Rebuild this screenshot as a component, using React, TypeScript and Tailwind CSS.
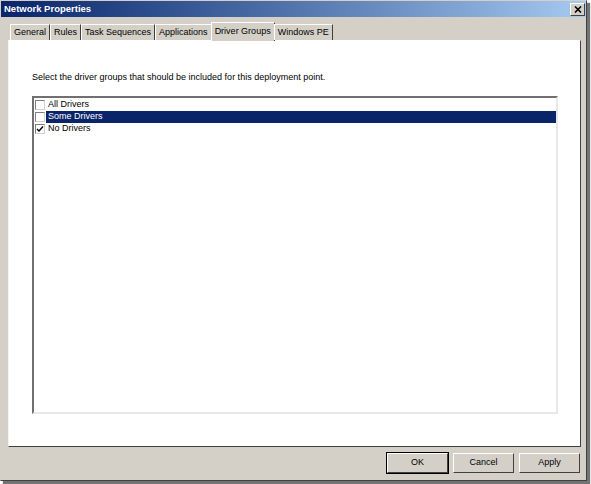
const tabs = ["General", "Rules", "Task Sequences", "Applications", "Driver Groups", "Windows PE"];

const items = [
  { label: "All Drivers", checked: false, selected: false },
  { label: "Some Drivers", checked: false, selected: true },
  { label: "No Drivers", checked: true, selected: false },
];

const Checkbox = ({ checked }: { checked: boolean }) => (
  <div className="w-[10px] h-[10px] bg-white border border-t-[#808080] border-l-[#808080] border-r-[#d4d0c8] border-b-[#d4d0c8] flex items-center justify-center shrink-0">
    {checked && (
      <svg width="8" height="8" viewBox="0 0 8 8">
        <path d="M1 4 L3 6 L7 1.5" fill="none" stroke="#000" strokeWidth="1.4" />
      </svg>
    )}
  </div>
);

const Button = ({ label, isDefault }: { label: string; isDefault?: boolean }) => (
  <button
    className={`w-[61px] h-[20px] bg-[#d4d0c8] text-[9px] text-black border border-t-white border-l-white border-r-[#404040] border-b-[#404040] ${
      isDefault ? "outline outline-1 outline-black" : ""
    }`}
  >
    {label}
  </button>
);

export default function App() {
  return (
    <div className="w-[591px] h-[484px] bg-white font-['Liberation_Sans',Arial,sans-serif]">
      <div className="w-[587px] h-[481px] bg-[#d4d0c8] border border-t-[#d4d0c8] border-l-[#d4d0c8] border-r-[#404040] border-b-[#404040] shadow-[3px_3px_1px_rgba(0,0,0,0.55)] flex flex-col">
        <div className="h-[16px] bg-gradient-to-r from-[#0a246a] to-[#a6caf0] flex items-center justify-between pl-[3px] pr-[1px]">
          <span className="text-white font-bold text-[9.5px]">Network Properties</span>
          <div className="w-[15px] h-[13px] bg-[#d4d0c8] border border-t-white border-l-white border-r-[#404040] border-b-[#404040] flex items-center justify-center">
            <svg width="8" height="7" viewBox="0 0 8 7">
              <path d="M1 0.5 L7 6.5 M7 0.5 L1 6.5" stroke="#000" strokeWidth="1.6" />
            </svg>
          </div>
        </div>

        <div className="flex items-end h-[18px] mt-[5px] pl-[9px] relative z-10">
          {tabs.map((t) => {
            const active = t === "Driver Groups";
            return (
              <div
                key={t}
                className={`px-[3px] text-[9px] text-black border-t border-l border-r border-t-white border-l-white border-r-[#404040] bg-[#d4d0c8] flex items-center ${
                  active ? "h-[19px] -mb-[1px] pb-[1px] -mx-[1px]" : "h-[16px]"
                }`}
              >
                {t}
              </div>
            );
          })}
        </div>

        <div className="ml-[7px] w-[573px] h-[407px] bg-white border border-t-white border-l-[#f4f4f4] border-r-[#404040] border-b-[#404040] flex flex-col pl-[23px] pt-[30px]">
          <p className="text-[9px] text-black leading-[12px]">
            Select the driver groups that should be included for this deployment point.
          </p>
          <div className="mt-[13px] w-[526px] h-[318px] border-2 border-t-[#707070] border-l-[#707070] border-r-[#e8e8e8] border-b-[#e8e8e8] pt-[1px]">
            {items.map((it) => (
              <div key={it.label} className="h-[12px] flex items-center">
                <div className="w-[12px] flex justify-center">
                  <Checkbox checked={it.checked} />
                </div>
                <div
                  className={`flex-1 h-[12px] flex items-center pl-[2px] text-[9px] ${
                    it.selected ? "bg-[#0a246a] text-white" : "text-black"
                  }`}
                >
                  {it.label}
                </div>
              </div>
            ))}
          </div>
        </div>

        <div className="flex justify-end gap-[5px] pr-[6px] mt-[6px]">
          <Button label="OK" isDefault />
          <Button label="Cancel" />
          <Button label="Apply" />
        </div>
      </div>
    </div>
  );
}
